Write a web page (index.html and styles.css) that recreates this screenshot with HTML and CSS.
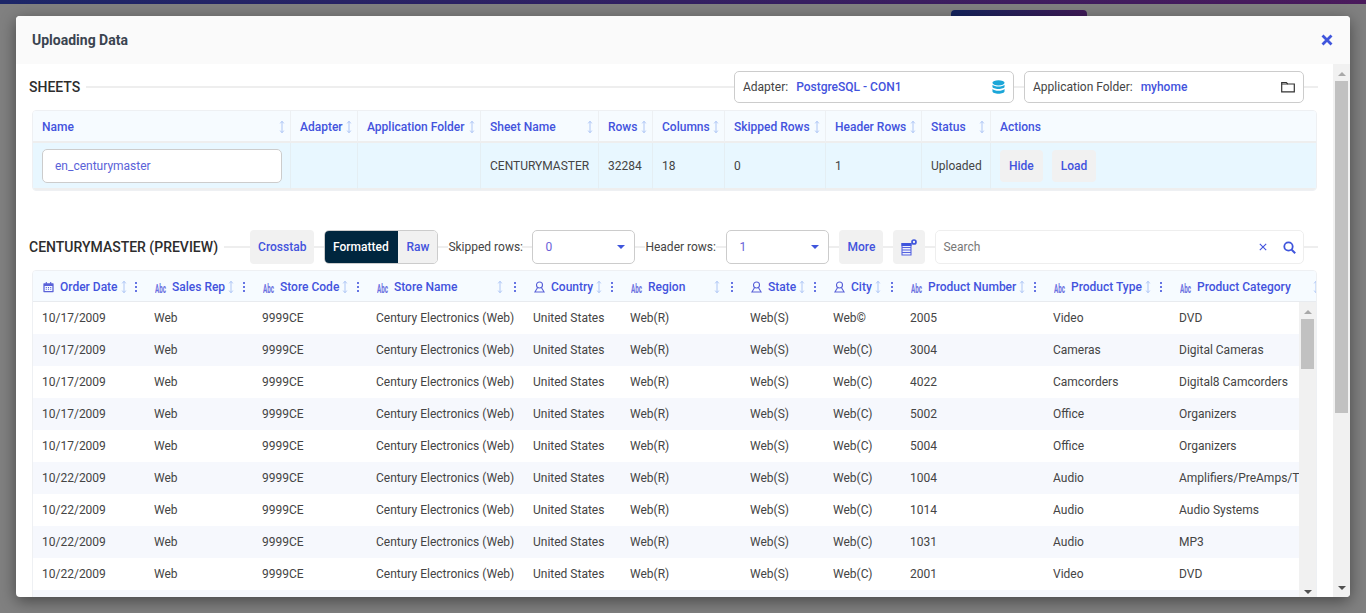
FILE: index.html
```html
<!DOCTYPE html>
<html lang="en">

<head>
    <meta charset="UTF-8">
    <meta name="viewport" content="width=device-width, initial-scale=1.0">
    <title>Uploading Data</title>
    <link rel="stylesheet" href="styles.css">
</head>

<body>
    <svg class="sprites" width="0" height="0">
        <symbol id="sort" viewBox="0 0 6 14">
            <path d="M3 1.5v11M1.2 3.4 3 1.2l1.8 2.200M1.200 10.600 3 12.800l1.800-2.200" fill="none" stroke="currentColor" stroke-width="1"/>
        </symbol>
        <symbol id="kebab" viewBox="0 0 4 12">
            <circle cx="2" cy="2" r="1.100"/><circle cx="2" cy="6" r="1.100"/><circle cx="2" cy="10" r="1.100"/>
        </symbol>
        <symbol id="cal" viewBox="0 0 12 12">
            <path d="M1 2h10a.6.6 0 0 1 .6.6v8.400a.6.6 0 0 1-.6.6H1a.6.6 0 0 1-.6-.6V2.600A.6.6 0 0 1 1 2zM1.800 4.800v5.500h8.400V4.800zM3 .6h1.200V2H3zM7.800 .6H9V2H7.800z"/>
            <path d="M3 6h1.200v1H3zM5.400 6h1.200v1H5.400zM7.800 6H9v1H7.800zM3 8h1.200v1H3zM5.400 8h1.200v1H5.400zM7.800 8H9v1H7.800z"/>
        </symbol>
        <symbol id="geo" viewBox="0 0 12 13">
            <circle cx="6" cy="4.300" r="3.300" fill="none" stroke="currentColor" stroke-width="1.200"/>
            <path d="M3.800 7.300 1 12h10L8.200 7.300" fill="none" stroke="currentColor" stroke-width="1.200"/>
        </symbol>
    </svg>

    <div class="topbar"></div>
    <div class="backdrop-btn"></div>

    <div class="modal">
        <div class="modal-head">
            <span class="modal-title">Uploading Data</span>
            <svg class="close-icon" width="12" height="12" viewBox="0 0 12 12"><path d="M1.500 1.500l9 9M10.500 1.500l-9 9" stroke="#3f55dc" stroke-width="2.800" fill="none"/></svg>
        </div>

        <div class="modal-body">
            <div class="modal-content">
                <!-- sheets -->
                <div class="section-row sheets-row">
                    <h2 class="section-title">SHEETS</h2>
                    <div class="line"></div>
                    <div class="picker adapter-picker">
                        <span class="picker-label">Adapter:</span>
                        <b class="picker-value">PostgreSQL - CON1</b>
                        <svg class="picker-icon" width="13" height="14" viewBox="0 0 14 15" preserveAspectRatio="none">
                            <ellipse cx="7" cy="3" rx="6.500" ry="2.800" fill="#1ba6d8"/>
                            <path d="M.5 5v2.200c0 1.400 2.900 2.400 6.500 2.400s6.500-1 6.500-2.400V5C12.300 6.300 9.800 6.900 7 6.900S1.700 6.300.5 5z" fill="#1ba6d8"/>
                            <path d="M.5 9.600v2.400C.5 13.500 3.400 14.700 7 14.700s6.500-1.200 6.500-2.700V9.600C12.300 10.900 9.800 11.500 7 11.500S1.700 10.900.5 9.600z" fill="#1ba6d8"/>
                        </svg>
                    </div>
                    <div class="line gap-line"></div>
                    <div class="picker folder-picker">
                        <span class="picker-label">Application Folder:</span>
                        <b class="picker-value">myhome</b>
                        <svg class="picker-icon" width="14" height="12" viewBox="0 0 14 12">
                            <path d="M.7 10.800V1.500h4.600l1.400 1.500h6.600v7.800z" fill="none" stroke="#333" stroke-width="1.200"/>
                            <path d="M.7 3h6" stroke="#333" stroke-width="1"/>
                        </svg>
                    </div>
                    <div class="line end-line"></div>
                </div>

                <div class="table-card sheets-card">
                    <table class="sheets-table">
                        <colgroup>
                            <col class="w-name"><col class="w-adapter"><col class="w-folder"><col class="w-sheet"><col class="w-rows"><col class="w-cols"><col class="w-skip"><col class="w-head"><col class="w-status"><col>
                        </colgroup>
                        <thead>
                            <tr>
                                <th><div class="th-in">Name<svg class="sort"><use href="#sort"/></svg></div></th>
                                <th><div class="th-in">Adapter<svg class="sort"><use href="#sort"/></svg></div></th>
                                <th><div class="th-in">Application Folder<svg class="sort"><use href="#sort"/></svg></div></th>
                                <th><div class="th-in">Sheet Name<svg class="sort"><use href="#sort"/></svg></div></th>
                                <th><div class="th-in">Rows<svg class="sort"><use href="#sort"/></svg></div></th>
                                <th><div class="th-in">Columns<svg class="sort"><use href="#sort"/></svg></div></th>
                                <th><div class="th-in">Skipped Rows<svg class="sort"><use href="#sort"/></svg></div></th>
                                <th><div class="th-in">Header Rows<svg class="sort"><use href="#sort"/></svg></div></th>
                                <th><div class="th-in">Status<svg class="sort"><use href="#sort"/></svg></div></th>
                                <th>Actions</th>
                            </tr>
                        </thead>
                        <tbody>
                            <tr>
                                <td><div class="name-input">en_centurymaster</div></td>
                                <td></td>
                                <td></td>
                                <td>CENTURYMASTER</td>
                                <td>32284</td>
                                <td>18</td>
                                <td>0</td>
                                <td>1</td>
                                <td>Uploaded</td>
                                <td><div class="actions"><button class="btn">Hide</button><button class="btn">Load</button></div></td>
                            </tr>
                        </tbody>
                    </table>
                </div>

                <!-- preview toolbar -->
                <div class="section-row preview-row">
                    <h2 class="section-title">CENTURYMASTER (PREVIEW)</h2>
                    <div class="line w-26"></div>
                    <button class="btn tool-btn">Crosstab</button>
                    <div class="line w-10"></div>
                    <div class="toggle">
                        <span class="toggle-on">Formatted</span>
                        <span class="toggle-off">Raw</span>
                    </div>
                    <div class="line w-10"></div>
                    <span class="field-label skip-label">Skipped rows:</span>
                    <div class="line w-10"></div>
                    <div class="select"><span>0</span><i class="caret"></i></div>
                    <div class="line w-10"></div>
                    <span class="field-label head-label">Header rows:</span>
                    <div class="line w-10"></div>
                    <div class="select"><span>1</span><i class="caret"></i></div>
                    <div class="line w-10"></div>
                    <button class="btn tool-btn more-btn">More</button>
                    <div class="line w-10"></div>
                    <button class="btn icon-btn">
                        <svg width="16" height="17" viewBox="0 0 16 17">
                            <path d="M1 4.500h9v11.500H1zM1 8.500h9M1 11h9M1 13.500h9" fill="#eef0fb" stroke="#5563e0" stroke-width="1.100"/>
                            <path d="M.5 4h10v3H.5z" fill="#3f55dc"/>
                            <circle cx="13" cy="3" r="2" fill="none" stroke="#3f55dc" stroke-width="1.700"/>
                        </svg>
                    </button>
                    <div class="line w-10"></div>
                    <div class="search">
                        <span class="search-text">Search</span>
                        <svg width="8" height="8" viewBox="0 0 8 8"><path d="M.8.8l6.400 6.400M7.200.8.800 7.200" stroke="#4353dd" stroke-width="1.100" fill="none"/></svg>
                        <svg class="search-icon" width="13" height="13" viewBox="0 0 13 13"><circle cx="5.500" cy="5.500" r="4.200" fill="none" stroke="#3f55dc" stroke-width="1.800"/><path d="M8.700 8.700l3.500 3.500" stroke="#3f55dc" stroke-width="2" fill="none"/></svg>
                    </div>
                    <div class="line end-line"></div>
                </div>

                <!-- preview table -->
                <div class="table-card preview-card">
                    <div class="preview-head">
                        <div class="ph w1"><svg class="type-icon"><use href="#cal"/></svg><b>Order Date</b><svg class="sort"><use href="#sort"/></svg><svg class="kebab"><use href="#kebab"/></svg></div>
                        <div class="ph w2"><span class="abc">Abc</span><b>Sales Rep</b><svg class="sort"><use href="#sort"/></svg><svg class="kebab"><use href="#kebab"/></svg></div>
                        <div class="ph w3"><span class="abc">Abc</span><b>Store Code</b><svg class="sort"><use href="#sort"/></svg><svg class="kebab"><use href="#kebab"/></svg></div>
                        <div class="ph w4"><span class="abc">Abc</span><b>Store Name</b><svg class="sort far"><use href="#sort"/></svg><svg class="kebab"><use href="#kebab"/></svg></div>
                        <div class="ph w5"><svg class="type-icon"><use href="#geo"/></svg><b>Country</b><svg class="sort"><use href="#sort"/></svg><svg class="kebab"><use href="#kebab"/></svg></div>
                        <div class="ph w6"><span class="abc">Abc</span><b>Region</b><svg class="sort far"><use href="#sort"/></svg><svg class="kebab"><use href="#kebab"/></svg></div>
                        <div class="ph w7"><svg class="type-icon"><use href="#geo"/></svg><b>State</b><svg class="sort"><use href="#sort"/></svg><svg class="kebab"><use href="#kebab"/></svg></div>
                        <div class="ph w8"><svg class="type-icon"><use href="#geo"/></svg><b>City</b><svg class="sort"><use href="#sort"/></svg><svg class="kebab"><use href="#kebab"/></svg></div>
                        <div class="ph w9"><span class="abc">Abc</span><b>Product Number</b><svg class="sort"><use href="#sort"/></svg><svg class="kebab"><use href="#kebab"/></svg></div>
                        <div class="ph w10"><span class="abc">Abc</span><b>Product Type</b><svg class="sort"><use href="#sort"/></svg><svg class="kebab"><use href="#kebab"/></svg></div>
                        <div class="ph w11"><span class="abc">Abc</span><b>Product Category</b><svg class="sort far"><use href="#sort"/></svg></div>
                    </div>
                    <div class="preview-main">
                        <div class="preview-rows">
                            <div class="pr"><span class="w1">10/17/2009</span><span class="w2">Web</span><span class="w3">9999CE</span><span class="w4">Century Electronics (Web)</span><span class="w5">United States</span><span class="w6">Web(R)</span><span class="w7">Web(S)</span><span class="w8">Web©</span><span class="w9">2005</span><span class="w10">Video</span><span class="w11">DVD</span></div>
                            <div class="pr"><span class="w1">10/17/2009</span><span class="w2">Web</span><span class="w3">9999CE</span><span class="w4">Century Electronics (Web)</span><span class="w5">United States</span><span class="w6">Web(R)</span><span class="w7">Web(S)</span><span class="w8">Web(C)</span><span class="w9">3004</span><span class="w10">Cameras</span><span class="w11">Digital Cameras</span></div>
                            <div class="pr"><span class="w1">10/17/2009</span><span class="w2">Web</span><span class="w3">9999CE</span><span class="w4">Century Electronics (Web)</span><span class="w5">United States</span><span class="w6">Web(R)</span><span class="w7">Web(S)</span><span class="w8">Web(C)</span><span class="w9">4022</span><span class="w10">Camcorders</span><span class="w11">Digital8 Camcorders</span></div>
                            <div class="pr"><span class="w1">10/17/2009</span><span class="w2">Web</span><span class="w3">9999CE</span><span class="w4">Century Electronics (Web)</span><span class="w5">United States</span><span class="w6">Web(R)</span><span class="w7">Web(S)</span><span class="w8">Web(C)</span><span class="w9">5002</span><span class="w10">Office</span><span class="w11">Organizers</span></div>
                            <div class="pr"><span class="w1">10/17/2009</span><span class="w2">Web</span><span class="w3">9999CE</span><span class="w4">Century Electronics (Web)</span><span class="w5">United States</span><span class="w6">Web(R)</span><span class="w7">Web(S)</span><span class="w8">Web(C)</span><span class="w9">5004</span><span class="w10">Office</span><span class="w11">Organizers</span></div>
                            <div class="pr"><span class="w1">10/22/2009</span><span class="w2">Web</span><span class="w3">9999CE</span><span class="w4">Century Electronics (Web)</span><span class="w5">United States</span><span class="w6">Web(R)</span><span class="w7">Web(S)</span><span class="w8">Web(C)</span><span class="w9">1004</span><span class="w10">Audio</span><span class="w11">Amplifiers/PreAmps/Tuners</span></div>
                            <div class="pr"><span class="w1">10/22/2009</span><span class="w2">Web</span><span class="w3">9999CE</span><span class="w4">Century Electronics (Web)</span><span class="w5">United States</span><span class="w6">Web(R)</span><span class="w7">Web(S)</span><span class="w8">Web(C)</span><span class="w9">1014</span><span class="w10">Audio</span><span class="w11">Audio Systems</span></div>
                            <div class="pr"><span class="w1">10/22/2009</span><span class="w2">Web</span><span class="w3">9999CE</span><span class="w4">Century Electronics (Web)</span><span class="w5">United States</span><span class="w6">Web(R)</span><span class="w7">Web(S)</span><span class="w8">Web(C)</span><span class="w9">1031</span><span class="w10">Audio</span><span class="w11">MP3</span></div>
                            <div class="pr"><span class="w1">10/22/2009</span><span class="w2">Web</span><span class="w3">9999CE</span><span class="w4">Century Electronics (Web)</span><span class="w5">United States</span><span class="w6">Web(R)</span><span class="w7">Web(S)</span><span class="w8">Web(C)</span><span class="w9">2001</span><span class="w10">Video</span><span class="w11">DVD</span></div>
                            <div class="pr"></div>
                        </div>
                        <div class="scrollbar inner-bar">
                            <i class="arrow-up"></i>
                            <div class="thumb"></div>
                            <i class="arrow-down"></i>
                        </div>
                    </div>
                </div>
            </div>

            <div class="scrollbar outer-bar">
                <i class="arrow-up"></i>
                <div class="thumb"></div>
                <i class="arrow-down"></i>
            </div>
        </div>
    </div>
</body>

</html>
```

FILE: styles.css
```css
* {
    box-sizing: border-box;
}

html,
body {
    height: 100%;
    margin: 0;
    overflow: hidden;
}

body {
    font-family: 'Roboto', sans-serif;
    font-size: 12px;
    color: #333;
    background-color: #808080;
}

.sprites {
    position: absolute;
}

.topbar {
    height: 4px;
    background: linear-gradient(90deg, #1c2668, #4a1a5c);
}

.backdrop-btn {
    position: absolute;
    left: 951px;
    top: 10px;
    width: 136px;
    height: 10px;
    border-radius: 4px;
    background: linear-gradient(90deg, #14245e, #401a58);
}

.modal {
    position: absolute;
    left: 16px;
    top: 16px;
    width: 1334px;
    height: 581px;
    display: flex;
    flex-direction: column;
    background-color: #fff;
    border-radius: 4px;
    overflow: hidden;
    box-shadow: 0 4px 16px rgba(0, 0, 0, 0.45);
}

.modal-head {
    height: 48px;
    flex: none;
    display: flex;
    align-items: center;
    justify-content: space-between;
    padding: 0 17px 0 16px;
    background-color: #fafafa;
}

.modal-title {
    font-size: 14px;
    font-weight: 700;
    color: #3a4450;
}

.modal-body {
    flex: 1;
    min-height: 0;
    display: flex;
}

.modal-content {
    flex: 1;
    min-width: 0;
    overflow: hidden;
    padding: 7px 15px 0 13px;
}

.section-row {
    display: flex;
    align-items: center;
}

.sheets-row {
    height: 32px;
}

.section-title {
    margin: 0;
    font-size: 14px;
    font-weight: 500;
    color: #2d2d2d;
    white-space: nowrap;
}

.line {
    height: 2px;
    background-color: #eee;
    flex: 1;
}

.sheets-row .section-title + .line {
    margin-left: 6px;
}

.gap-line {
    flex: none;
    width: 10px;
}

.end-line {
    flex: none;
    width: 14px;
}

.w-26 {
    flex: none;
    width: 26px;
    margin-left: 6px;
}

.w-10 {
    flex: none;
    width: 10px;
}

.picker {
    height: 32px;
    display: flex;
    align-items: center;
    padding: 0 8px;
    border: 1px solid #ccc;
    border-radius: 5px;
    background-color: #fff;
    flex: none;
}

.adapter-picker {
    width: 280px;
}

.folder-picker {
    width: 280px;
}

.picker-label {
    color: #444;
    margin-right: 8px;
}

.picker-value {
    font-weight: 500;
    color: #4353dd;
}

.picker-icon {
    margin-left: auto;
}

.table-card {
    margin-left: 3px;
    border: 1px solid #eef0f3;
    border-radius: 4px;
    overflow: hidden;
}

.sheets-card {
    margin-top: 7px;
    width: 1285px;
    height: 81px;
}

.sheets-table {
    width: 100%;
    border-collapse: separate;
    border-spacing: 0;
    table-layout: fixed;
}

.w-name { width: 258px; }
.w-adapter { width: 67px; }
.w-folder { width: 123px; }
.w-sheet { width: 118px; }
.w-rows { width: 54px; }
.w-cols { width: 72px; }
.w-skip { width: 101px; }
.w-head { width: 96px; }
.w-status { width: 69px; }

.sheets-table th {
    height: 32px;
    padding: 1px 5px 0 9px;
    text-align: left;
    font-weight: 500;
    color: #4353dd;
    white-space: nowrap;
    background-color: #f6fbff;
    border-right: 1px solid #edf0f3;
    border-bottom: 2px solid #eeeeee;
}

.th-in {
    display: flex;
    align-items: center;
    justify-content: space-between;
}

.sheets-table td {
    height: 47px;
    padding: 0 8px 0 9px;
    color: #444;
    background-color: #e8f7ff;
    border-right: 1px solid #e4eef3;
    border-bottom: 2px solid #eeeeee;
    white-space: nowrap;
}

.sheets-table th:last-child,
.sheets-table td:last-child {
    border-right: none;
}

.sort {
    width: 6px;
    height: 14px;
    color: #aec6f5;
    flex: none;
}

.name-input {
    height: 34px;
    line-height: 32px;
    padding-left: 12px;
    border: 1px solid #ccc;
    border-radius: 5px;
    background-color: #fff;
    color: #5a62d8;
}

.actions {
    display: flex;
    align-items: center;
    gap: 9px;
}

.btn {
    border: none;
    border-radius: 4px;
    background-color: #f1f1f1;
    color: #4353dd;
    font-family: 'Roboto', sans-serif;
    font-size: 12px;
    font-weight: 500;
    padding: 0;
}

.actions .btn {
    height: 32px;
    padding: 0 9px;
}

.preview-row {
    height: 34px;
    margin-top: 39px;
}

.tool-btn {
    height: 34px;
    padding: 0 8px;
    flex: none;
}

.more-btn {
    width: 44px;
}

.icon-btn {
    width: 32px;
    height: 34px;
    flex: none;
    display: flex;
    align-items: center;
    justify-content: center;
}

.toggle {
    display: flex;
    height: 34px;
    flex: none;
    border: 1px solid #ccc;
    border-radius: 5px;
    overflow: hidden;
    font-weight: 500;
}

.toggle span {
    display: flex;
    align-items: center;
}

.toggle-on {
    width: 73px;
    padding-right: 2px;
    justify-content: center;
    background-color: #00263e;
    color: #fff;
}

.toggle-off {
    width: 39px;
    justify-content: center;
    background-color: #f1f1f1;
    color: #4353dd;
}

.field-label {
    color: #444;
    white-space: nowrap;
    flex: none;
}

.skip-label {
    width: 74px;
}

.head-label {
    width: 71px;
}

.select {
    width: 103px;
    height: 34px;
    flex: none;
    display: flex;
    align-items: center;
    justify-content: space-between;
    padding: 0 9px 0 12px;
    border: 1px solid #ccc;
    border-radius: 5px;
    color: #6a62d8;
}

.caret {
    width: 0;
    height: 0;
    border-left: 4px solid transparent;
    border-right: 4px solid transparent;
    border-top: 4px solid #3f55dc;
}

.search {
    flex: 1;
    height: 34px;
    display: flex;
    align-items: center;
    gap: 16px;
    padding: 0 7px;
    border: 1px solid #eee;
    border-radius: 5px;
}

.search-text {
    color: #777;
    margin-right: auto;
}

.preview-card {
    margin-top: 6px;
    width: 1285px;
    height: 340px;
    background-color: #fff;
}

.preview-head {
    display: flex;
    height: 31px;
    padding-top: 1px;
    background-color: #f6fbff;
    border-bottom: 1px solid #e8ebef;
}

.ph {
    flex: none;
    display: flex;
    align-items: center;
    padding-left: 10px;
    padding-right: 6px;
    white-space: nowrap;
    color: #4353dd;
}

.ph.w1 {
    padding-left: 9px;
}

.ph b {
    font-weight: 500;
    margin-left: 6px;
}

.ph .sort {
    margin-left: 3px;
}

.ph .far {
    margin-left: auto;
}

.ph .kebab {
    margin-left: auto;
}

.ph .far + .kebab {
    margin-left: 10px;
}

.type-icon {
    width: 11px;
    height: 12px;
    margin-left: 1px;
    fill: #5a62d8;
    color: #5a62d8;
    flex: none;
}

.kebab {
    width: 4px;
    height: 12px;
    fill: #4353dd;
    flex: none;
}

.abc {
    width: 11px;
    margin-left: 1px;
    flex: none;
    font-size: 12px;
    line-height: 1;
    font-weight: 700;
    color: #6a6fe0;
    position: relative;
    top: 2px;
    transform: scaleX(0.52);
    transform-origin: left center;
}

.w1 { width: 111px; }
.w2 { width: 108px; }
.w3 { width: 114px; }
.w4 { width: 157px; }
.w5 { width: 97px; }
.w6 { width: 120px; }
.w7 { width: 83px; }
.w8 { width: 77px; }
.w9 { width: 143px; }
.w10 { width: 126px; }
.w11 { width: 155px; }

.ph.w11 {
    padding-right: 5px;
}

.preview-main {
    display: flex;
    height: 308px;
}

.preview-rows {
    width: 1266px;
    flex: none;
    overflow: hidden;
}

.pr {
    display: flex;
    height: 32px;
    align-items: center;
    color: #444;
    white-space: nowrap;
}

.pr:nth-child(even) {
    background-color: #f6f8fd;
}

.pr span {
    flex: none;
    padding-left: 10px;
}

.pr .w1 {
    padding-left: 9px;
}

.scrollbar {
    flex: none;
    display: flex;
    flex-direction: column;
    align-items: center;
    background-color: #f1f1f1;
    position: relative;
}

.inner-bar {
    width: 17px;
    height: 295px;
}

.outer-bar {
    width: 17px;
    height: 533px;
}

.thumb {
    width: 13px;
    margin-top: 5px;
    background-color: #c1c1c1;
}

.inner-bar .thumb {
    height: 50px;
}

.outer-bar .thumb {
    height: 332px;
}

.arrow-up {
    margin-top: 8px;
    border-left: 4px solid transparent;
    border-right: 4px solid transparent;
    border-bottom: 4px solid #a8a8a8;
}

.arrow-down {
    margin-top: auto;
    margin-bottom: 3px;
    border-left: 4px solid transparent;
    border-right: 4px solid transparent;
    border-top: 4px solid #505050;
}

.outer-bar .arrow-down {
    margin-bottom: 7px;
}
```
